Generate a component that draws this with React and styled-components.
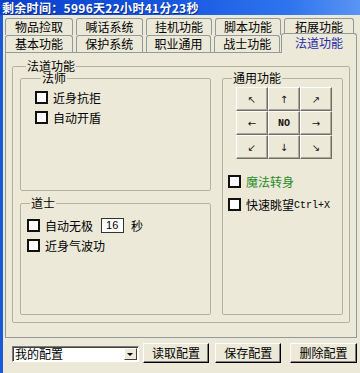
import React from "react";
import styled, { createGlobalStyle } from "styled-components";

const GlobalStyle = createGlobalStyle`
  html, body {
    margin: 0;
    padding: 0;
    background: #ece9d8;
  }
  body {
    font-family: "Noto Sans CJK SC", "Liberation Sans", sans-serif;
    font-size: 12px;
    color: #000;
  }
`;

const Window = styled.div`
  width: 360px;
  height: 373px;
  display: flex;
  flex-direction: column;
  overflow: hidden;
  background: #ece9d8;
`;

const TitleBar = styled.div`
  height: 15px;
  flex: none;
  display: flex;
  align-items: center;
  padding-left: 2px;
  background: linear-gradient(to right, #0a3fcb 0%, #1556e0 45%, #2f74ee 80%, #5a95f2 100%);
  color: #fff;
  font-weight: bold;
  font-size: 12px;
  line-height: 15px;
  letter-spacing: 0.3px;
  white-space: nowrap;
  text-shadow: 1px 1px 0 #0a2a8a;
`;

const Client = styled.div`
  flex: 1;
  display: flex;
  flex-direction: column;
  border-left: 3px solid #1a5ad8;
  padding: 3px 3px 0 2px;
`;

const TabRow = styled.div`
  display: flex;
  gap: 3px;
  height: 17px;
  align-items: flex-end;
  position: relative;
`;

const Tab = styled.div`
  box-sizing: border-box;
  width: ${(p) => p.$w}px;
  height: ${(p) => (p.$active ? 20 : 17)}px;
  margin-left: ${(p) => (p.$active ? -2 : 0)}px;
  margin-bottom: ${(p) => (p.$active ? -1 : 0)}px;
  border: 1px solid #919b9c;
  border-bottom: none;
  border-radius: 3px 3px 0 0;
  background: #ece9d8;
  color: ${(p) => (p.$active ? "#1f2aa8" : "#000")};
  text-align: center;
  line-height: ${(p) => (p.$active ? 18 : 15)}px;
  position: relative;
  z-index: ${(p) => (p.$active ? 2 : 1)};
  white-space: nowrap;
`;

const Panel = styled.div`
  box-sizing: border-box;
  height: 286px;
  border: 1px solid #919b9c;
  background: #ece9d8;
  display: flex;
  flex-direction: column;
  position: relative;
  z-index: 1;
`;

const Group = styled.fieldset`
  margin: 0;
  padding: 0;
  min-width: 0;
  border: 1px solid #b5b2a5;
  border-radius: 2px;
  box-sizing: border-box;
`;

const OuterGroup = styled(Group)`
  flex: 1;
  margin: 7px 6px 14px 6px;
  padding: 0 7px 7px 7px;
  display: grid;
  grid-template-columns: 191px 121px;
  column-gap: 11px;
`;

const Legend = styled.legend`
  padding: 0 1px;
  margin-left: ${(p) => p.$indent}px;
  line-height: 12px;
  font-size: 12px;
`;

const Column = styled.div`
  display: flex;
  flex-direction: column;
  gap: 6px;
`;

const SubGroup = styled(Group)`
  height: ${(p) => p.$h}px;
  padding: ${(p) => p.$pad};
`;

const SideGroup = styled(Group)`
  padding: 3px 0 0 5px;
`;

const CheckRow = styled.div`
  display: flex;
  align-items: center;
  gap: 5px;
  height: ${(p) => p.$h || 20}px;
  color: ${(p) => p.$color || "#000"};
  white-space: nowrap;
`;

const Box = styled.span`
  box-sizing: border-box;
  width: 13px;
  height: 13px;
  flex: none;
  border: 2px solid #111;
  background: #fff;
`;

const Label = styled.span`
  display: flex;
  align-items: center;
`;

const Mono = styled.span`
  font-family: "Liberation Mono", monospace;
  font-size: 10px;
  padding-top: 1px;
`;

const SpinInput = styled.span`
  box-sizing: border-box;
  width: 23px;
  height: 15px;
  margin: 0 7px 0 8px;
  border: 1px solid #333;
  background: #fff;
  padding-left: 4px;
  line-height: 13px;
  font-family: "Liberation Sans", sans-serif;
  font-size: 11px;
`;

const Pad = styled.div`
  display: grid;
  grid-template-columns: repeat(3, 32px);
  grid-template-rows: repeat(3, 24px);
  margin: 0 0 11px 8px;
`;

const PadButton = styled.div`
  box-sizing: border-box;
  display: flex;
  align-items: center;
  justify-content: center;
  border: 1px solid;
  border-color: #fff #716f64 #716f64 #fff;
  box-shadow: inset -1px -1px 0 #aca899;
  background: #ece9d8;
  font-family: "DejaVu Sans", sans-serif;
  font-size: 10px;
  color: #111;
`;

const PadLabel = styled.span`
  font-family: "Liberation Mono", monospace;
  font-weight: bold;
  font-size: 10px;
`;

const BottomBar = styled.div`
  display: flex;
  align-items: center;
  height: 29px;
  padding: 0 0 0 7px;
`;

const Combo = styled.div`
  box-sizing: border-box;
  width: 127px;
  height: 16px;
  margin-top: 3px;
  display: flex;
  align-items: center;
  border: 1px solid;
  border-color: #7a7a7a #fff #fff #7a7a7a;
  box-shadow: inset 1px 1px 0 #404040;
  background: #fff;
  padding-left: 2px;
  line-height: 14px;
`;

const ComboText = styled.span`
  flex: 1;
`;

const ComboArrow = styled.span`
  box-sizing: border-box;
  width: 13px;
  height: 12px;
  margin-right: 1px;
  display: flex;
  align-items: center;
  justify-content: center;
  border: 1px solid;
  border-color: #fff #404040 #404040 #fff;
  background: #ece9d8;
  &::after {
    content: "";
    border-left: 3px solid transparent;
    border-right: 3px solid transparent;
    border-top: 3px solid #000;
  }
`;

const Button = styled.div`
  box-sizing: border-box;
  width: ${(p) => p.$w}px;
  height: 20px;
  margin-left: ${(p) => p.$gap}px;
  display: flex;
  align-items: center;
  justify-content: center;
  border: 1px solid;
  border-color: #fff #000 #000 #fff;
  box-shadow: inset -1px -1px 0 #808080;
  background: #ece9d8;
`;

const topTabs = [
  { label: "物品捡取", w: 68 },
  { label: "喊话系统", w: 67 },
  { label: "挂机功能", w: 66 },
  { label: "脚本功能", w: 66 },
  { label: "拓展功能", w: 70 },
];

const frontTabs = [
  { label: "基本功能", w: 68 },
  { label: "保护系统", w: 67 },
  { label: "职业通用", w: 66 },
  { label: "战士功能", w: 66 },
  { label: "法道功能", w: 76, active: true },
];

const pad = ["↖", "↑", "↗", "←", "NO", "→", "↙", "↓", "↘"];

const Check = ({ children, color, h }) => (
  <CheckRow $color={color} $h={h}>
    <Box />
    <Label>{children}</Label>
  </CheckRow>
);

export default function App() {
  return (
    <Window>
      <GlobalStyle />
      <TitleBar>剩余时间：5996天22小时41分23秒</TitleBar>
      <Client>
        <TabRow>
          {topTabs.map((t) => (
            <Tab key={t.label} $w={t.w}>
              {t.label}
            </Tab>
          ))}
        </TabRow>
        <TabRow>
          {frontTabs.map((t) => (
            <Tab key={t.label} $w={t.w} $active={t.active}>
              {t.label}
            </Tab>
          ))}
        </TabRow>
        <Panel>
          <OuterGroup>
            <Legend $indent={6}>法道功能</Legend>
            <Column>
              <SubGroup $h={119} $pad="3px 0 0 14px">
                <Legend $indent={6}>法师</Legend>
                <Check>近身抗拒</Check>
                <Check>自动开盾</Check>
              </SubGroup>
              <SubGroup $h={118} $pad="6px 0 0 6px">
                <Legend $indent={3}>道士</Legend>
                <Check>
                  自动无极
                  <SpinInput>16</SpinInput>
                  秒
                </Check>
                <Check>近身气波功</Check>
              </SubGroup>
            </Column>
            <SideGroup>
              <Legend $indent={4}>通用功能</Legend>
              <Pad>
                {pad.map((p) => (
                  <PadButton key={p}>
                    {p === "NO" ? <PadLabel>NO</PadLabel> : p}
                  </PadButton>
                ))}
              </Pad>
              <Check color="#1f8a1f" h={23}>
                魔法转身
              </Check>
              <Check h={23}>
                快速眺望<Mono>Ctrl+X</Mono>
              </Check>
            </SideGroup>
          </OuterGroup>
        </Panel>
        <BottomBar>
          <Combo>
            <ComboText>我的配置</ComboText>
            <ComboArrow />
          </Combo>
          <Button $w={67} $gap={4}>读取配置</Button>
          <Button $w={66} $gap={6}>保存配置</Button>
          <Button $w={67} $gap={9}>删除配置</Button>
        </BottomBar>
      </Client>
    </Window>
  );
}
